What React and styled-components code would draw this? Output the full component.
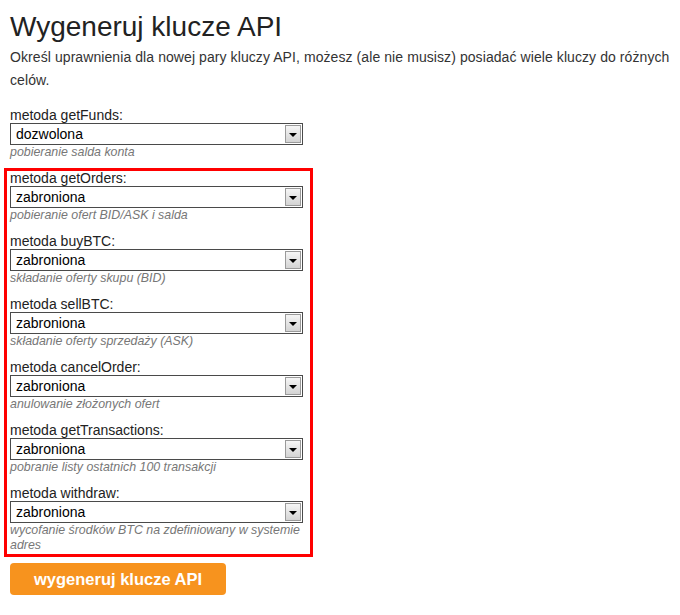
import styled, { createGlobalStyle } from "styled-components";

const GlobalStyle = createGlobalStyle`
  body {
    margin: 0;
    background: #ffffff;
    font-family: "Liberation Sans", Arial, sans-serif;
    color: #222222;
  }
`;

const Page = styled.div`
  padding: 11px 0 0 10px;
  width: 668px;
`;

const Title = styled.h1`
  margin: 0;
  font-size: 28px;
  line-height: 32px;
  font-weight: normal;
  color: #222222;
`;

const Intro = styled.p`
  margin: 3px 0 16px 0;
  font-size: 14px;
  line-height: 23px;
  letter-spacing: 0.08px;
  color: #333333;
`;

const Form = styled.form`
  width: 293px;
`;

const Highlight = styled.div`
  margin: 0 -10px 0 -6px;
  padding: 0 7px 1px 3px;
  border: 3px solid #ff0000;
`;

const Group = styled.div`
  margin-bottom: ${(p) => (p.$last ? "0" : p.$tight ? "8px" : "11px")};
`;

const Label = styled.label`
  display: block;
  font-size: 14px;
  line-height: 15px;
  color: #222222;
`;

const SelectWrap = styled.div`
  position: relative;
  height: 22px;
`;

const Select = styled.select`
  appearance: none;
  -webkit-appearance: none;
  box-sizing: border-box;
  width: 100%;
  height: 22px;
  margin: 0;
  padding: 0 22px 0 5px;
  border: 1px solid #4a4a4a;
  border-radius: 0;
  background: #ffffff;
  font-family: "Liberation Sans", Arial, sans-serif;
  font-size: 14px;
  color: #000000;
  outline: none;
`;

const Arrow = styled.span`
  position: absolute;
  top: 2px;
  right: 2px;
  width: 16px;
  height: 18px;
  box-sizing: border-box;
  border: 1px solid #9a9a9a;
  background: linear-gradient(#f6f6f6, #d4d4d4);
  display: flex;
  align-items: center;
  justify-content: center;
  pointer-events: none;

  &::after {
    content: "";
    border-left: 4px solid transparent;
    border-right: 4px solid transparent;
    border-top: 4px solid #000000;
    margin-top: 1px;
  }
`;

const Hint = styled.div`
  font-size: 12.4px;
  line-height: 15px;
  font-style: italic;
  color: #777777;
`;

const Submit = styled.button`
  margin-top: 6px;
  width: 216px;
  height: 32px;
  border: none;
  border-radius: 4px;
  background: #f7931e;
  color: #ffffff;
  font-family: "Liberation Sans", Arial, sans-serif;
  font-size: 16.5px;
  font-weight: bold;
  cursor: pointer;
`;

const methods = [
  { name: "getOrders", hint: "pobieranie ofert BID/ASK i salda" },
  { name: "buyBTC", hint: "składanie oferty skupu (BID)" },
  { name: "sellBTC", hint: "składanie oferty sprzedaży (ASK)" },
  { name: "cancelOrder", hint: "anulowanie złożonych ofert" },
  { name: "getTransactions", hint: "pobranie listy ostatnich 100 transakcji" },
  { name: "withdraw", hint: "wycofanie środków BTC na zdefiniowany w systemie adres" },
];

const Method = ({ name, hint, value, tight, last }) => (
  <Group $tight={tight} $last={last}>
    <Label htmlFor={name}>metoda {name}:</Label>
    <SelectWrap>
      <Select id={name} defaultValue={value}>
        <option value="dozwolona">dozwolona</option>
        <option value="zabroniona">zabroniona</option>
      </Select>
      <Arrow />
    </SelectWrap>
    <Hint>{hint}</Hint>
  </Group>
);

export default function App() {
  return (
    <>
      <GlobalStyle />
      <Page>
        <Title>Wygeneruj klucze API</Title>
        <Intro>
          Określ uprawnienia dla nowej pary kluczy API, możesz (ale nie musisz) posiadać wiele kluczy do różnych celów.
        </Intro>
        <Form onSubmit={(e) => e.preventDefault()}>
          <Method name="getFunds" hint="pobieranie salda konta" value="dozwolona" tight />
          <Highlight>
            {methods.map((m, i) => (
              <Method
                key={m.name}
                name={m.name}
                hint={m.hint}
                value="zabroniona"
                last={i === methods.length - 1}
              />
            ))}
          </Highlight>
          <Submit type="submit">wygeneruj klucze API</Submit>
        </Form>
      </Page>
    </>
  );
}
